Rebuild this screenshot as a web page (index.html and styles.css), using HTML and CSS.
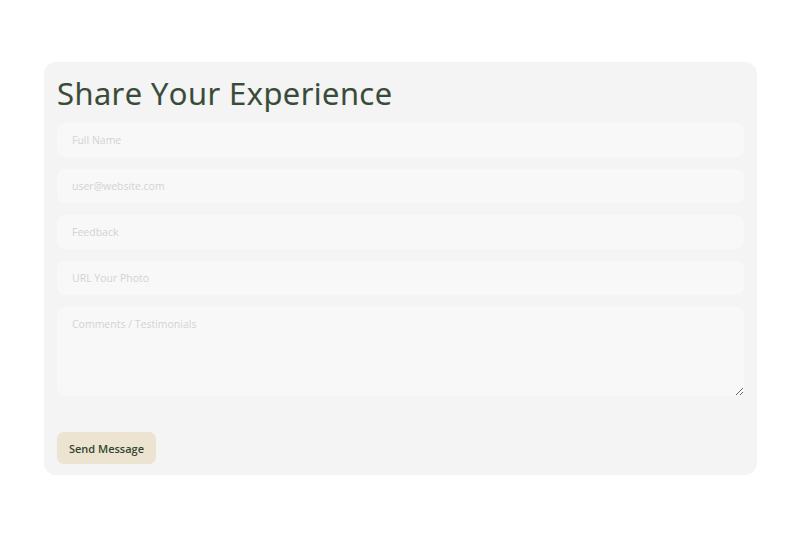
FILE: index.html
```html
<!DOCTYPE html>
<html lang="en">
<head>
<meta charset="utf-8">
<title>Share Your Experience</title>
<link rel="stylesheet" href="styles.css">
</head>
<body>
<div class="page">
  <form class="card">
    <h1 class="title">Share Your Experience</h1>
    <input class="field" type="text" placeholder="Full Name">
    <input class="field" type="email" placeholder="user@website.com">
    <input class="field" type="text" placeholder="Feedback">
    <input class="field" type="text" placeholder="URL Your Photo">
    <textarea class="field area" placeholder="Comments / Testimonials"></textarea>
    <button class="send" type="button">Send Message</button>
  </form>
</div>
</body>
</html>
```

FILE: styles.css
```css
html, body {
  margin: 0;
  padding: 0;
  background: #ffffff;
}
.page {
  padding: 62px 43px 0 44px;
}
.card {
  background: #f4f4f4;
  border-radius: 12px;
  padding: 12px 13px 11px 13px;
  display: flex;
  flex-direction: column;
  align-items: flex-start;
}
.title {
  margin: 0 0 11px 0;
  font-family: "Open Sans", sans-serif;
  font-weight: 400;
  font-size: 31px;
  line-height: 38px;
  color: #384a38;
  letter-spacing: 0.45px;
  -webkit-text-stroke: 0.2px #384a38;
}
.field {
  box-sizing: border-box;
  width: 100%;
  height: 34px;
  margin: 0 0 12px 0;
  border: none;
  outline: none;
  border-radius: 8px;
  background: #f8f8f8;
  padding: 0 15px;
  font-family: "Open Sans", sans-serif;
  font-size: 10.5px;
  color: #333;
}
.field::placeholder {
  color: #d3d3d3;
}
.area {
  height: 89px;
  padding: 10px 15px;
  margin-bottom: 36px;
  resize: vertical;
  display: block;
}
.send {
  border: none;
  border-radius: 7px;
  background: #ece4d0;
  color: #344434;
  font-family: "Open Sans", sans-serif;
  font-weight: 600;
  font-size: 11px;
  width: 99px;
  height: 32px;
  padding: 0;
  cursor: pointer;
}
```
